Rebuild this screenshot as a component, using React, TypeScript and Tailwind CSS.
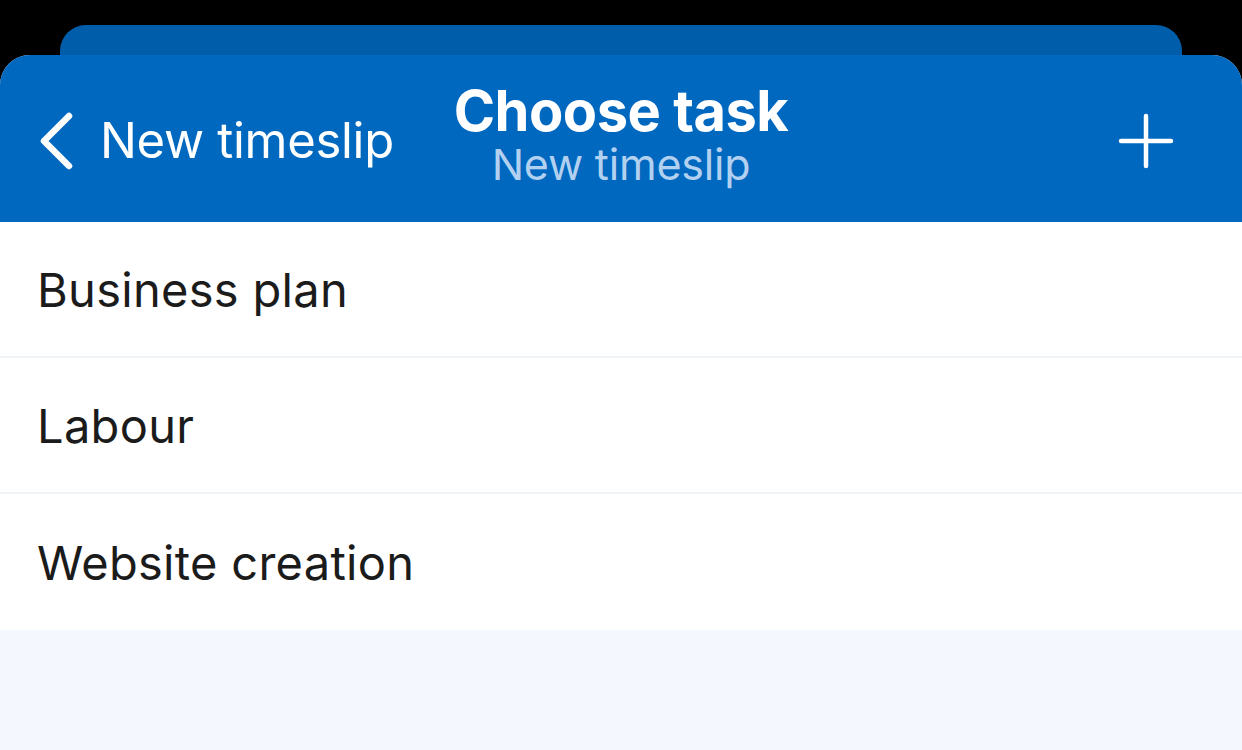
export default function App() {
  const tasks = ['Business plan', 'Labour', 'Website creation']

  return (
    <div className="h-[750px] w-[1242px] bg-black flex flex-col overflow-hidden" style={{ fontFamily: 'Inter, "Noto Sans", sans-serif' }}>
      {/* stacked sheet behind */}
      <div className="mx-[60px] mt-[25px] h-[30px] rounded-t-[26px] bg-[#005da9]" />

      {/* front sheet */}
      <div className="flex-1 flex flex-col rounded-t-[30px] bg-[#f4f7fd] overflow-hidden">
        <header className="h-[167px] bg-[#0068bf] flex items-center px-[38px] relative">
          <div className="flex items-center gap-[26px] text-white pt-[4px]">
            <svg width="36" height="58" viewBox="0 0 36 58" fill="none">
              <path d="M31 4 L6 29 L31 54" stroke="white" strokeWidth="6.5" strokeLinecap="round" strokeLinejoin="round" />
            </svg>
            <span className="text-[49px] leading-none tracking-[-0.3px]">New timeslip</span>
          </div>

          <div className="absolute inset-x-0 top-[30px] flex flex-col items-center pointer-events-none">
            <span className="text-[56px] leading-[52px] font-bold text-white tracking-[-0.5px]">Choose task</span>
            <span className="text-[43px] leading-[44px] mt-[5px] text-[#b2d0ef] tracking-[-0.2px]">New timeslip</span>
          </div>

          <div className="ml-auto mr-[30px] pt-[4px]">
            <svg width="56" height="56" viewBox="0 0 56 56" fill="none">
              <path d="M28 3 V53 M3 28 H53" stroke="white" strokeWidth="4.5" strokeLinecap="round" />
            </svg>
          </div>
        </header>

        <ul className="bg-white">
          {tasks.map((t, i) => (
            <li
              key={t}
              className={
                'h-[136px] flex items-center pl-[37px] pt-[3px] text-[47px] text-[#1b1b1b] tracking-[0.3px] ' +
                (i < tasks.length - 1 ? 'border-b-2 border-[#eff2f7]' : '')
              }
            >
              {t}
            </li>
          ))}
        </ul>
      </div>
    </div>
  )
}
